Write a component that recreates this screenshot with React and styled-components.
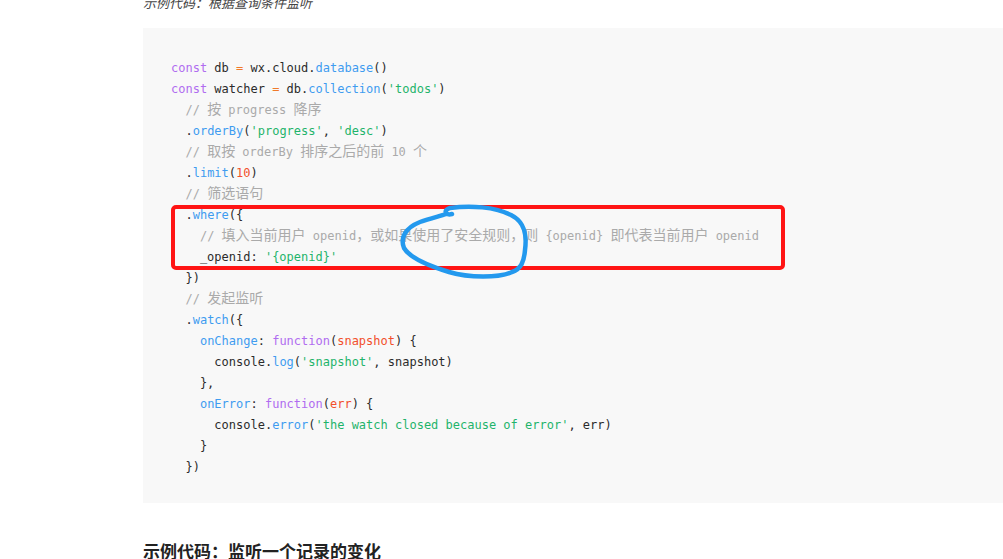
import React from 'react'
import styled, { createGlobalStyle } from 'styled-components'

const GlobalStyle = createGlobalStyle`
  html, body {
    margin: 0;
    padding: 0;
    background: #ffffff;
    overflow: hidden;
  }
`

const StyledPage = styled.div`
  padding-left: 143px;
  width: 900px;
  font-family: "Noto Sans CJK SC", "Noto Sans", sans-serif;
  color: #333;
`

const StyledCaption = styled.p`
  margin: -6px 0 0 0;
  font-size: 13px;
  line-height: 18px;
  font-style: italic;
  color: #444;
`

const StyledCodeBlock = styled.div`
  position: relative;
  margin-top: 16px;
  padding: 30px 28px 25px;
  background-color: #f8f8f8;
`

const StyledPre = styled.pre`
  margin: 0;
  font-family: "DejaVu Sans Mono", "Liberation Mono", monospace;
  font-size: 12px;
  line-height: 21px;
  color: #2b2b2b;
  white-space: pre;
`

const StyledLine = styled.div`
  height: 21px;
`

const tokenColors = {
  kw: '#b06cf0',
  op: '#f07a2a',
  fn: '#3f9cf0',
  str: '#1fb46b',
  num: '#f2502c',
  cm: '#aaaaaa',
  prop: '#3f9cf0'
}

const StyledToken = styled.span`
  color: ${({ $kind }) => tokenColors[$kind] || 'inherit'};
`

const StyledCjk = styled.span`
  font-family: "Noto Sans CJK SC", sans-serif;
  font-size: 14px;
  line-height: 1;
`

const StyledHighlightBox = styled.div`
  position: absolute;
  left: 28px;
  top: 177px;
  width: 606px;
  height: 57px;
  border: 4px solid #ff1414;
  border-radius: 5px;
  pointer-events: none;
`

const StyledScribble = styled.svg`
  position: absolute;
  left: 0;
  top: 0;
  overflow: visible;
  pointer-events: none;
`

const StyledHeading = styled.h3`
  margin: 36px 0 0 0;
  font-size: 17px;
  line-height: 24px;
  font-weight: bold;
  color: #222;
`

const CJK_RE = /([\u3000-\u303f\u4e00-\u9fff\uff00-\uffef]+)/

const Text = ({ value }) => {
  return value.split(CJK_RE).map((part, idx) => (
    CJK_RE.test(part)
      ? <StyledCjk key={idx}>{part}</StyledCjk>
      : <React.Fragment key={idx}>{part}</React.Fragment>
  ))
}

const lines = [
  [['kw', 'const'], [null, ' db '], ['op', '='], [null, ' wx.cloud.'], ['fn', 'database'], [null, '()']],
  [['kw', 'const'], [null, ' watcher '], ['op', '='], [null, ' db.'], ['fn', 'collection'], [null, '('], ['str', "'todos'"], [null, ')']],
  [[null, '  '], ['cm', '// 按 progress 降序']],
  [[null, '  .'], ['fn', 'orderBy'], [null, '('], ['str', "'progress'"], [null, ', '], ['str', "'desc'"], [null, ')']],
  [[null, '  '], ['cm', '// 取按 orderBy 排序之后的前 10 个']],
  [[null, '  .'], ['fn', 'limit'], [null, '('], ['num', '10'], [null, ')']],
  [[null, '  '], ['cm', '// 筛选语句']],
  [[null, '  .'], ['fn', 'where'], [null, '({']],
  [[null, '    '], ['cm', '// 填入当前用户 openid，或如果使用了安全规则，则 {openid} 即代表当前用户 openid']],
  [[null, '    _openid: '], ['str', "'{openid}'"]],
  [[null, '  })']],
  [[null, '  '], ['cm', '// 发起监听']],
  [[null, '  .'], ['fn', 'watch'], [null, '({']],
  [[null, '    '], ['prop', 'onChange'], [null, ': '], ['kw', 'function'], [null, '('], ['num', 'snapshot'], [null, ') {']],
  [[null, '      console.'], ['fn', 'log'], [null, '('], ['str', "'snapshot'"], [null, ', snapshot)']],
  [[null, '    },']],
  [[null, '    '], ['prop', 'onError'], [null, ': '], ['kw', 'function'], [null, '('], ['num', 'err'], [null, ') {']],
  [[null, '      console.'], ['fn', 'error'], [null, '('], ['str', "'the watch closed because of error'"], [null, ', err)']],
  [[null, '    }']],
  [[null, '  })']]
]

// hand drawn circle, coords relative to the code block
const Scribble = () => {
  return (
    <StyledScribble width="1" height="1">
      <path
        d="M309,186 C302,188 300,182 307,180 C328,177 352,179 368,187 C382,194 384,207 382,222 C381,234 378,241 369,244 C356,250 326,250 306,244 C286,238 267,230 261,220 C257,210 262,200 277,194 C288,190 298,188 303,186"
        fill="none"
        stroke="#2399ee"
        strokeWidth="4.5"
        strokeLinecap="round"
        strokeLinejoin="round"
      />
    </StyledScribble>
  )
}

const CodeBlock = () => {
  return (
    <StyledCodeBlock>
      <StyledPre>
        {lines.map((tokens, idx) => (
          <StyledLine key={idx}>
            {tokens.map(([kind, value], tIdx) => (
              <StyledToken key={tIdx} $kind={kind}>
                <Text value={value} />
              </StyledToken>
            ))}
          </StyledLine>
        ))}
      </StyledPre>
      <StyledHighlightBox />
      <Scribble />
    </StyledCodeBlock>
  )
}

const App = () => {
  return (
    <>
      <GlobalStyle />
      <StyledPage>
        <StyledCaption>示例代码：根据查询条件监听</StyledCaption>
        <CodeBlock />
        <StyledHeading>示例代码：监听一个记录的变化</StyledHeading>
      </StyledPage>
    </>
  )
}

export default App
